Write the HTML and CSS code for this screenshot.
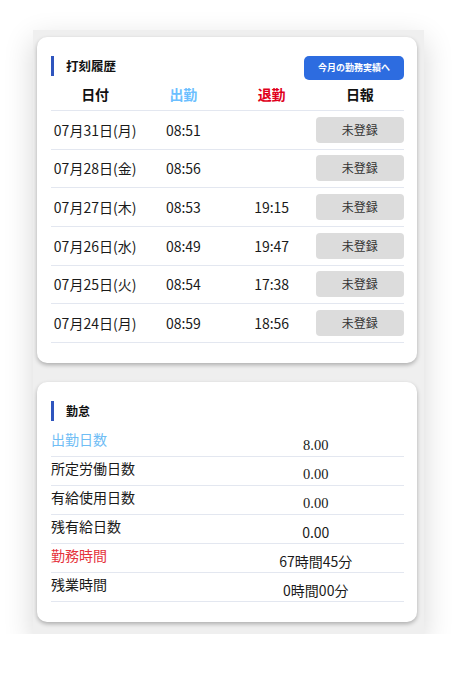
FILE: index.html
```html
<!DOCTYPE html>
<html lang="ja">
<head>
<meta charset="utf-8">
<link rel="stylesheet" href="styles.css">
</head>
<body>
<div class="frame">
  <section class="card card-history">
    <div class="card-head">
      <h2 class="title">打刻履歴</h2>
      <button class="btn-month">今月の勤務実績へ</button>
    </div>
    <div class="grid grid-head">
      <div>日付</div>
      <div class="c-in">出勤</div>
      <div class="c-out">退勤</div>
      <div>日報</div>
    </div>
    <div class="grid row"><div>07月31日(月)</div><div>08:51</div><div></div><div><span class="btn-report">未登録</span></div></div>
    <div class="grid row"><div>07月28日(金)</div><div>08:56</div><div></div><div><span class="btn-report">未登録</span></div></div>
    <div class="grid row"><div>07月27日(木)</div><div>08:53</div><div>19:15</div><div><span class="btn-report">未登録</span></div></div>
    <div class="grid row"><div>07月26日(水)</div><div>08:49</div><div>19:47</div><div><span class="btn-report">未登録</span></div></div>
    <div class="grid row"><div>07月25日(火)</div><div>08:54</div><div>17:38</div><div><span class="btn-report">未登録</span></div></div>
    <div class="grid row"><div>07月24日(月)</div><div>08:59</div><div>18:56</div><div><span class="btn-report">未登録</span></div></div>
  </section>

  <section class="card card-attend">
    <h2 class="title title-sm">勤怠</h2>
    <div class="stat"><div class="label c-in-light">出勤日数</div><div class="value serif">8.00</div></div>
    <div class="stat"><div class="label">所定労働日数</div><div class="value serif">0.00</div></div>
    <div class="stat"><div class="label">有給使用日数</div><div class="value serif">0.00</div></div>
    <div class="stat"><div class="label">残有給日数</div><div class="value">0.00</div></div>
    <div class="stat"><div class="label c-red-light">勤務時間</div><div class="value">67時間45分</div></div>
    <div class="stat"><div class="label">残業時間</div><div class="value">0時間00分</div></div>
  </section>
</div>
</body>
</html>
```

FILE: styles.css
```css
* { box-sizing: border-box; }
html, body { margin: 0; padding: 0; background: #ffffff; }
body {
  font-family: "Noto Sans CJK JP", "Noto Sans", sans-serif;
  color: #1a1a1a;
}
.frame {
  margin: 30px 0 0 33px;
  width: 391px;
  background: #efefef;
  padding: 7px 7px 12px 4px;
  box-shadow: 0 10px 28px rgba(0, 0, 0, 0.16);
}
.card {
  background: #fff;
  border-radius: 10px;
  box-shadow: 0 2px 4px rgba(0, 0, 0, 0.28);
  padding: 19px 13px 20px 14px;
}
.card-attend {
  margin-top: 19px;
}
.card-head {
  display: flex;
  justify-content: space-between;
  align-items: flex-start;
  height: 24px;
}
.title {
  margin: 0;
  border-left: 3px solid #2f55be;
  padding-left: 12px;
  font-size: 12.5px;
  font-weight: 700;
  line-height: 20px;
  height: 20px;
  color: #111;
}
.title-sm { font-size: 12px; margin-bottom: 7px; }
.btn-month {
  font-family: inherit;
  border: none;
  background: #2d6ce0;
  color: #fff;
  font-size: 9px;
  font-weight: 700;
  height: 24px;
  width: 100px;
  border-radius: 5px;
  padding: 0;
  line-height: 24px;
}
.grid {
  display: grid;
  grid-template-columns: repeat(4, 1fr);
  text-align: center;
  align-items: center;
  border-bottom: 1px solid #e3e7f0;
}
.grid-head {
  height: 31px;
  font-size: 14px;
  font-weight: 700;
  color: #111;
  padding-bottom: 2px;
}
.c-in { color: #6cbfff; }
.c-out { color: #e0001b; }
.row {
  height: 38.67px;
  font-size: 14px;
  color: #1a1a1a;
}
.btn-report {
  display: block;
  height: 26px;
  line-height: 26px;
  background: #dcdcdc;
  border-radius: 4px;
  font-size: 12px;
  color: #333;
}
.stat {
  display: grid;
  grid-template-columns: 1fr 1fr;
  height: 29px;
  border-bottom: 1px solid #e3e7f0;
  font-size: 14px;
}
.label {
  line-height: 20px;
  padding-top: 1px;
  color: #1a1a1a;
}
.value {
  text-align: center;
  line-height: 20px;
  padding-top: 7px;
  color: #1a1a1a;
}
.serif { font-family: "Liberation Serif", serif; font-size: 14.5px; }
.c-in-light { color: #6fbdf5; }
.c-red-light { color: #e5323c; }
```
